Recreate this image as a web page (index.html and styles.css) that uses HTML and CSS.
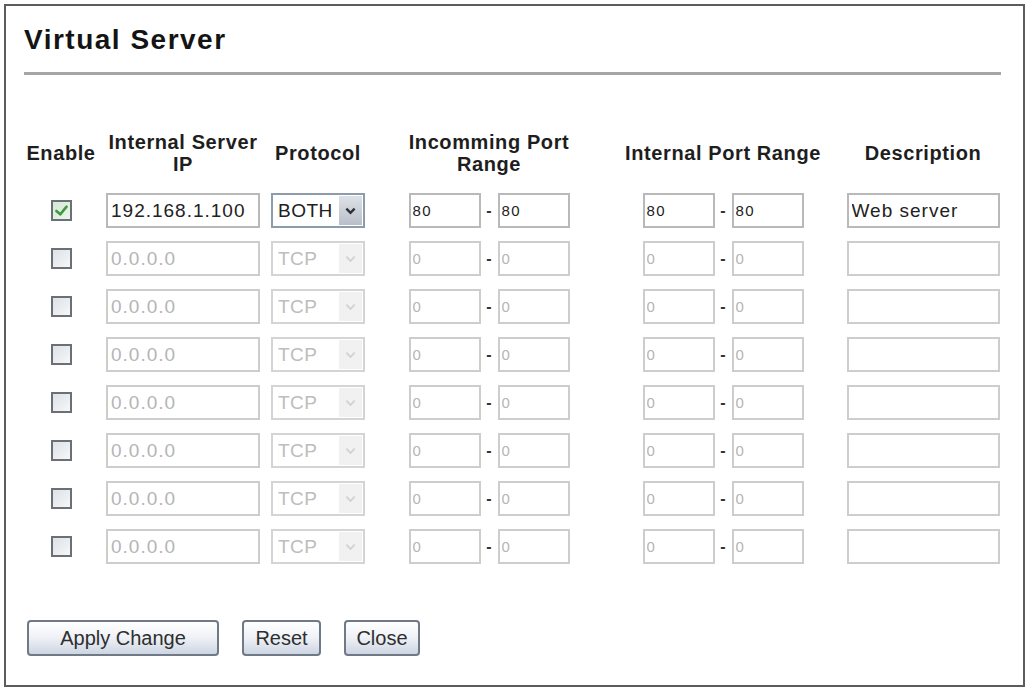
FILE: index.html
```html
<!DOCTYPE html>
<html lang="en">
<head>
    <meta charset="UTF-8">
    <title>Virtual Server</title>
    <link rel="stylesheet" href="styles.css">
</head>
<body>
<div class="frame">
    <h1 class="title">Virtual Server</h1>
    <div class="rule"></div>

    <div class="cols heads">
        <div class="head">Enable</div>
        <div class="head">Internal Server<br>IP</div>
        <div class="head">Protocol</div>
        <div class="head">Incomming Port<br>Range</div>
        <div class="head">Internal Port Range</div>
        <div class="head">Description</div>
    </div>

    <div class="cols rows">
        <!-- row 1 -->
        <div class="cell"><span class="check on"><svg viewBox="0 0 20 20" width="17" height="17"><path d="M4 10.5 L8.5 14.5 L16 5.5" fill="none" stroke="#3f9a3f" stroke-width="3" stroke-linecap="round" stroke-linejoin="round"/></svg></span></div>
        <div class="cell"><input class="txt ip" value="192.168.1.100"></div>
        <div class="cell"><div class="select"><span class="val">BOTH</span><span class="arrow"><svg viewBox="0 0 12 8" width="11" height="8"><path d="M1.5 1.5 L6 6 L10.5 1.5" fill="none" stroke="#2b2f36" stroke-width="2.6"/></svg></span></div></div>
        <div class="cell"><input class="txt port" value="80"><span class="dash">-</span><input class="txt port" value="80"></div>
        <div class="cell"><input class="txt port" value="80"><span class="dash">-</span><input class="txt port" value="80"></div>
        <div class="cell"><input class="txt desc" value="Web server"></div>

        <!-- row 2 -->
        <div class="cell"><span class="check"></span></div>
        <div class="cell"><input class="txt ip" value="0.0.0.0" disabled></div>
        <div class="cell"><div class="select off"><span class="val">TCP</span><span class="arrow"><svg viewBox="0 0 12 8" width="11" height="8"><path d="M1.5 1.5 L6 6 L10.5 1.5" fill="none" stroke="#cfd2d6" stroke-width="2"/></svg></span></div></div>
        <div class="cell"><input class="txt port" value="0" disabled><span class="dash">-</span><input class="txt port" value="0" disabled></div>
        <div class="cell"><input class="txt port" value="0" disabled><span class="dash">-</span><input class="txt port" value="0" disabled></div>
        <div class="cell"><input class="txt desc" value="" disabled></div>

        <!-- row 3 -->
        <div class="cell"><span class="check"></span></div>
        <div class="cell"><input class="txt ip" value="0.0.0.0" disabled></div>
        <div class="cell"><div class="select off"><span class="val">TCP</span><span class="arrow"><svg viewBox="0 0 12 8" width="11" height="8"><path d="M1.5 1.5 L6 6 L10.5 1.5" fill="none" stroke="#cfd2d6" stroke-width="2"/></svg></span></div></div>
        <div class="cell"><input class="txt port" value="0" disabled><span class="dash">-</span><input class="txt port" value="0" disabled></div>
        <div class="cell"><input class="txt port" value="0" disabled><span class="dash">-</span><input class="txt port" value="0" disabled></div>
        <div class="cell"><input class="txt desc" value="" disabled></div>

        <!-- row 4 -->
        <div class="cell"><span class="check"></span></div>
        <div class="cell"><input class="txt ip" value="0.0.0.0" disabled></div>
        <div class="cell"><div class="select off"><span class="val">TCP</span><span class="arrow"><svg viewBox="0 0 12 8" width="11" height="8"><path d="M1.5 1.5 L6 6 L10.5 1.5" fill="none" stroke="#cfd2d6" stroke-width="2"/></svg></span></div></div>
        <div class="cell"><input class="txt port" value="0" disabled><span class="dash">-</span><input class="txt port" value="0" disabled></div>
        <div class="cell"><input class="txt port" value="0" disabled><span class="dash">-</span><input class="txt port" value="0" disabled></div>
        <div class="cell"><input class="txt desc" value="" disabled></div>

        <!-- row 5 -->
        <div class="cell"><span class="check"></span></div>
        <div class="cell"><input class="txt ip" value="0.0.0.0" disabled></div>
        <div class="cell"><div class="select off"><span class="val">TCP</span><span class="arrow"><svg viewBox="0 0 12 8" width="11" height="8"><path d="M1.5 1.5 L6 6 L10.5 1.5" fill="none" stroke="#cfd2d6" stroke-width="2"/></svg></span></div></div>
        <div class="cell"><input class="txt port" value="0" disabled><span class="dash">-</span><input class="txt port" value="0" disabled></div>
        <div class="cell"><input class="txt port" value="0" disabled><span class="dash">-</span><input class="txt port" value="0" disabled></div>
        <div class="cell"><input class="txt desc" value="" disabled></div>

        <!-- row 6 -->
        <div class="cell"><span class="check"></span></div>
        <div class="cell"><input class="txt ip" value="0.0.0.0" disabled></div>
        <div class="cell"><div class="select off"><span class="val">TCP</span><span class="arrow"><svg viewBox="0 0 12 8" width="11" height="8"><path d="M1.5 1.5 L6 6 L10.5 1.5" fill="none" stroke="#cfd2d6" stroke-width="2"/></svg></span></div></div>
        <div class="cell"><input class="txt port" value="0" disabled><span class="dash">-</span><input class="txt port" value="0" disabled></div>
        <div class="cell"><input class="txt port" value="0" disabled><span class="dash">-</span><input class="txt port" value="0" disabled></div>
        <div class="cell"><input class="txt desc" value="" disabled></div>

        <!-- row 7 -->
        <div class="cell"><span class="check"></span></div>
        <div class="cell"><input class="txt ip" value="0.0.0.0" disabled></div>
        <div class="cell"><div class="select off"><span class="val">TCP</span><span class="arrow"><svg viewBox="0 0 12 8" width="11" height="8"><path d="M1.5 1.5 L6 6 L10.5 1.5" fill="none" stroke="#cfd2d6" stroke-width="2"/></svg></span></div></div>
        <div class="cell"><input class="txt port" value="0" disabled><span class="dash">-</span><input class="txt port" value="0" disabled></div>
        <div class="cell"><input class="txt port" value="0" disabled><span class="dash">-</span><input class="txt port" value="0" disabled></div>
        <div class="cell"><input class="txt desc" value="" disabled></div>

        <!-- row 8 -->
        <div class="cell"><span class="check"></span></div>
        <div class="cell"><input class="txt ip" value="0.0.0.0" disabled></div>
        <div class="cell"><div class="select off"><span class="val">TCP</span><span class="arrow"><svg viewBox="0 0 12 8" width="11" height="8"><path d="M1.5 1.5 L6 6 L10.5 1.5" fill="none" stroke="#cfd2d6" stroke-width="2"/></svg></span></div></div>
        <div class="cell"><input class="txt port" value="0" disabled><span class="dash">-</span><input class="txt port" value="0" disabled></div>
        <div class="cell"><input class="txt port" value="0" disabled><span class="dash">-</span><input class="txt port" value="0" disabled></div>
        <div class="cell"><input class="txt desc" value="" disabled></div>
    </div>

    <div class="actions">
        <button class="btn apply">Apply Change</button>
        <button class="btn reset">Reset</button>
        <button class="btn close">Close</button>
    </div>
</div>
</body>
</html>
```

FILE: styles.css
```css
body {
    margin: 0;
    background: #fff;
    font-family: "Liberation Sans", Arial, sans-serif;
    color: #1b1b1b;
}

.frame {
    box-sizing: border-box;
    margin: 4px 0 0 4px;
    width: 1021px;
    height: 683px;
    border: 2px solid #5c5c5c;
    padding: 18px 0 0 18px;
}

.title {
    margin: 0;
    font-size: 28px;
    line-height: 32px;
    font-weight: 700;
    letter-spacing: 1.5px;
    color: #141414;
}

.rule {
    margin-top: 16px;
    width: 977px;
    height: 3px;
    background: #a6a6a6;
}

.cols {
    display: grid;
    grid-template-columns: 74px 170px 100px 242px 226px 174px;
}

.heads {
    margin-top: 55px;
    height: 46px;
    align-items: center;
}

.head {
    text-align: center;
    font-size: 20px;
    line-height: 22px;
    font-weight: 700;
    letter-spacing: 0.6px;
    color: #1e1e1e;
}

.rows {
    margin-top: 17px;
    grid-auto-rows: 35px;
    row-gap: 13px;
}

.cell {
    display: flex;
    align-items: center;
    justify-content: center;
}

/* checkbox */
.check {
    box-sizing: border-box;
    width: 21px;
    height: 21px;
    border: 2px solid #6a7075;
    background: linear-gradient(135deg, #dce2e8 0%, #f6f7f8 100%);
    display: flex;
    align-items: center;
    justify-content: center;
}

.check.on {
    background: linear-gradient(135deg, #d3e8d3 0%, #eef5ee 100%);
}

/* text inputs */
.txt {
    box-sizing: border-box;
    height: 35px;
    margin: 0;
    border: 2px solid #b9b9b9;
    padding: 0 3px;
    background: #fff;
    font-family: "Liberation Sans", Arial, sans-serif;
    font-size: 19px;
    letter-spacing: 1px;
    color: #222;
    outline: none;
}

.txt:disabled {
    border-color: #cdcdcd;
    color: #b5b5b5;
    background: #fff;
}

.ip {
    width: 154px;
}

.desc {
    width: 153px;
}

.port {
    width: 72px;
    padding: 0 2px;
    font-size: 15px;
    letter-spacing: 1.5px;
}

.dash {
    width: 17px;
    text-align: center;
    font-size: 16px;
    font-weight: 700;
    color: #333;
}

/* protocol select */
.select {
    box-sizing: border-box;
    width: 94px;
    height: 35px;
    border: 2px solid #8e9bab;
    display: flex;
    align-items: stretch;
    background: #fff;
}

.select .val {
    flex: 1;
    display: flex;
    align-items: center;
    padding-left: 5px;
    font-size: 19px;
    letter-spacing: 0.5px;
    color: #202020;
}

.select .arrow {
    width: 23px;
    margin: 1px;
    display: flex;
    align-items: center;
    justify-content: center;
    background: linear-gradient(#dde1e7, #b9bfc9);
}

.select.off {
    border-color: #d4d4d4;
}

.select.off .val {
    color: #bdbdbd;
}

.select.off .arrow {
    background: #f1f1f1;
}

/* buttons */
.actions {
    margin-top: 56px;
    padding-left: 3px;
    display: flex;
    gap: 23px;
}

.btn {
    box-sizing: border-box;
    height: 36px;
    border: 2px solid #6f7a86;
    border-radius: 4px;
    background: linear-gradient(#ffffff 0%, #eef1f6 50%, #cdd5e2 100%);
    font-family: "Liberation Sans", Arial, sans-serif;
    font-size: 20px;
    color: #2e2e2e;
    padding: 0;
    cursor: pointer;
}

.apply {
    width: 192px;
}

.reset {
    width: 79px;
}

.close {
    width: 76px;
}
```
